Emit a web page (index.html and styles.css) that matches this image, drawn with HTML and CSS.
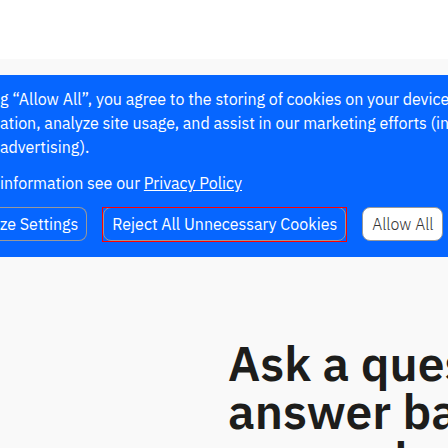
FILE: index.html
```html
<!DOCTYPE html>
<html lang="en">
<head>
<meta charset="utf-8">
<title>Ask a question</title>
<link rel="stylesheet" href="styles.css">
</head>
<body>
<header class="topbar"></header>
<section class="consent" aria-label="Cookie consent">
<p class="notice">g “Allow All”, you agree to the storing of cookies on your device<br>ation, analyze site usage, and assist in our marketing efforts (in<br>advertising).</p>
<p class="notice">information see our <a href="#privacy">Privacy Policy</a></p>
<div class="actions">
<button class="btn btn-settings" type="button">ze Settings</button>
<div class="highlight"><button class="btn" type="button">Reject All Unnecessary Cookies</button></div>
<button class="btn btn-allow" type="button">Allow All</button>
</div>
</section>
<main class="hero">
<h1>Ask a ques<br>answer ba<br>research</h1>
</main>
</body>
</html>
```
FILE: styles.css
```css
* {
  box-sizing: border-box;
}

body {
  margin: 0;
  height: 100vh;
  overflow: hidden;
  background: #f9f9f9;
  color: #1d1d1b;
  font-family: "IBM Plex Sans", Roboto, sans-serif;
}

.topbar {
  height: 59px;
  margin-bottom: 16px;
  background: #fff;
}

.consent {
  padding: 12px 0 16px;
  overflow: hidden;
  background: #0666ff;
  color: #fff;
  font-size: 16px;
  font-weight: 400;
  line-height: 24px;
  white-space: nowrap;
}

.notice {
  margin: 0 0 12px;
}

.consent a {
  color: #fff;
}

.actions {
  display: flex;
  align-items: center;
  gap: 16px;
}

.btn {
  height: 34px;
  padding: 0 8px;
  border: 1px solid #999;
  border-radius: 8px;
  background: #0666ff;
  color: #fff;
  font: inherit;
  display: block;
}

.btn-settings {
  padding-left: 0;
  border-left: 0;
  border-radius: 0 8px 8px 0;
}

.highlight {
  position: relative;
}

/* Square frame drawn over the rounded button */
.highlight::after {
  content: "";
  position: absolute;
  inset: 0 -1px -1px;
  border: 1px solid #f00;
  pointer-events: none;
}

.btn-allow {
  padding: 0 9px;
  background: #fff;
  color: #333;
  font-weight: 300;
}

.hero {
  padding: 82px 0 0 228px;
  white-space: nowrap;
}

h1 {
  margin: 0;
  font-size: 48px;
  font-weight: 600;
  line-height: 48px;
}
```
